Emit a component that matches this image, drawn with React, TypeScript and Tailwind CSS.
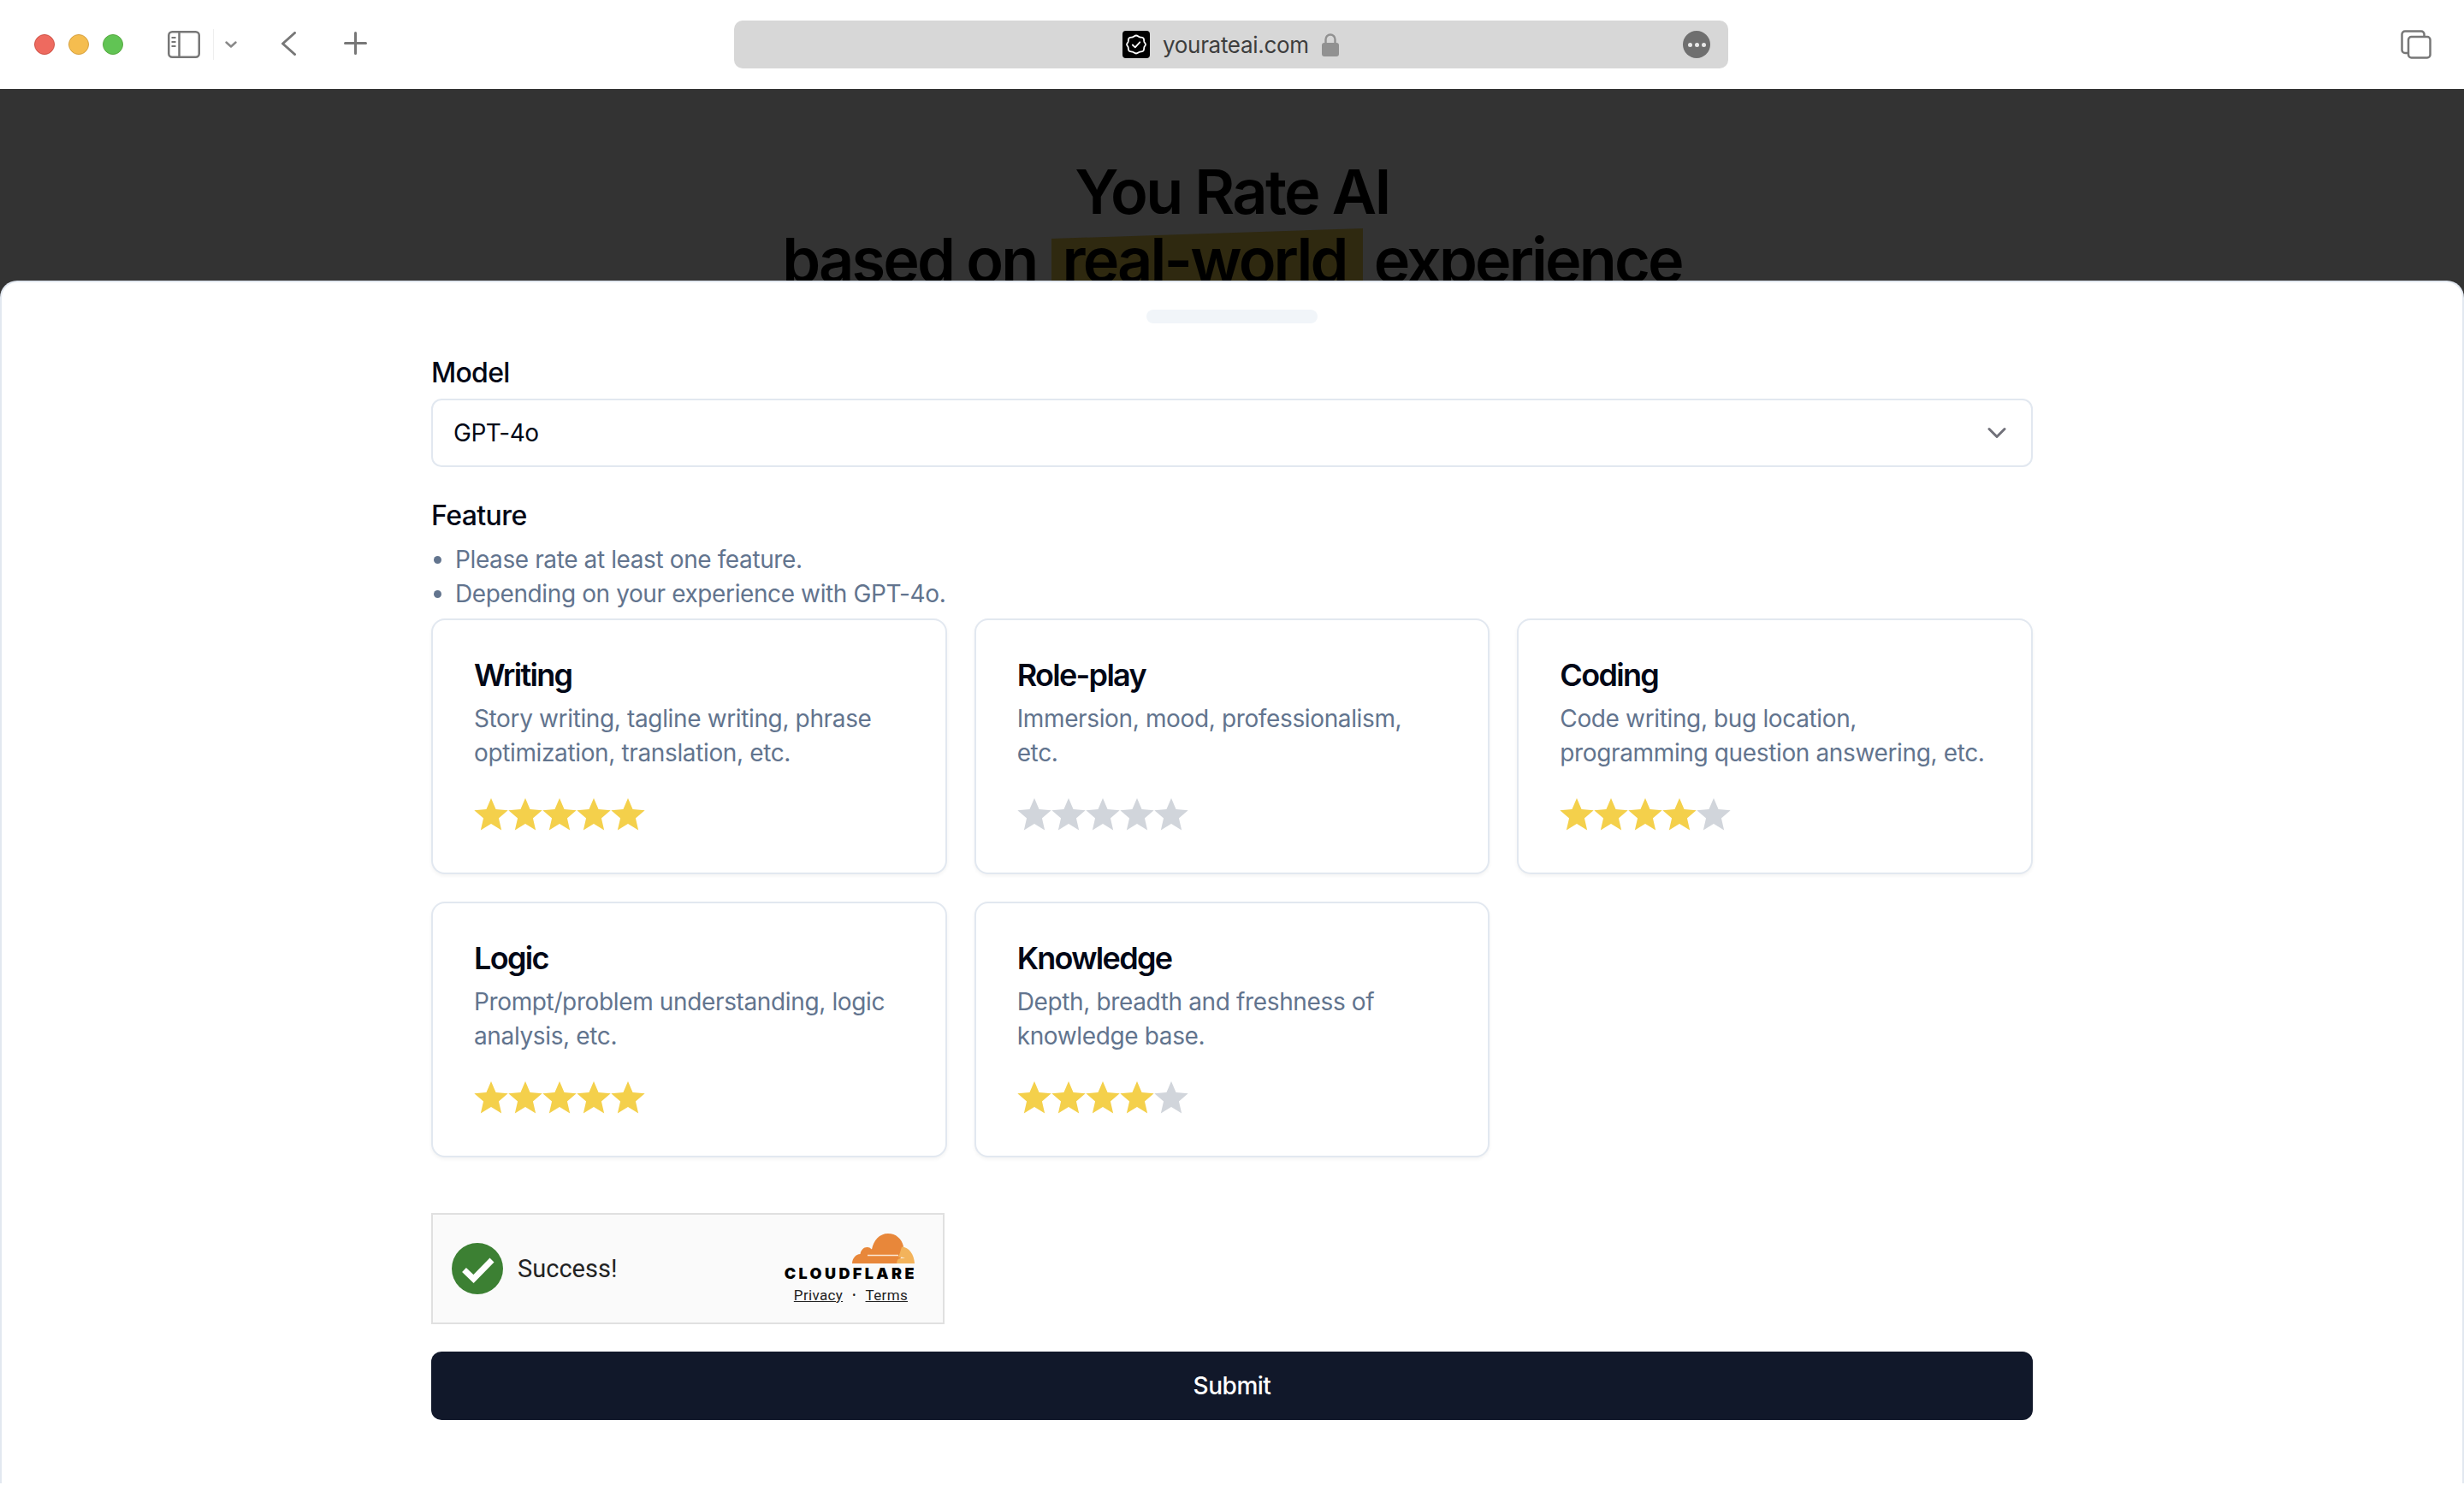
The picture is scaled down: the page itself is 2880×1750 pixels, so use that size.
import { ChevronDown } from 'lucide-react';

const features = [
  { title: 'Writing', desc: 'Story writing, tagline writing, phrase optimization, translation, etc.', stars: 5 },
  { title: 'Role-play', desc: 'Immersion, mood, professionalism, etc.', stars: 0 },
  { title: 'Coding', desc: 'Code writing, bug location, programming question answering, etc.', stars: 4 },
  { title: 'Logic', desc: 'Prompt/problem understanding, logic analysis, etc.', stars: 5 },
  { title: 'Knowledge', desc: 'Depth, breadth and freshness of knowledge base.', stars: 4 },
];

function Star({ on }: { on: boolean }) {
  return (
    <svg viewBox="2 2 20 19.3" className={on ? 'w-[40px] h-[38px] fill-[#f4d04b]' : 'w-[40px] h-[38px] fill-[#d1d5db]'}>
      <path d="M12 17.27L18.18 21l-1.64-7.03L22 9.24l-7.19-.61L12 2 9.19 8.63 2 9.24l5.46 4.73L5.82 21z" />
    </svg>
  );
}

function FeatureCard({ title, desc, stars }: { title: string; desc: string; stars: number }) {
  return (
    <div className="border-2 border-slate-200 rounded-[16px] bg-white pt-[44px] pb-[49px] px-[48px] shadow-[0_2px_4px_rgba(0,0,0,0.05)]">
      <h3 className="text-[36px] leading-[40px] font-semibold tracking-[-0.047em] text-[#020817]">{title}</h3>
      <p className="mt-[11px] pr-[2px] text-[28px] leading-[40px] tracking-[-0.013em] text-slate-500">{desc}</p>
      <div className="flex mt-[33px]">
        {[0, 1, 2, 3, 4].map((i) => (
          <Star key={i} on={i < stars} />
        ))}
      </div>
    </div>
  );
}

function Toolbar() {
  return (
    <div className="h-[104px] bg-white flex items-center pl-[40px] shrink-0">
      <div className="flex gap-[16px]">
        <div className="w-[24px] h-[24px] rounded-full bg-[#ee6a5f] border border-[#ce5347]" />
        <div className="w-[24px] h-[24px] rounded-full bg-[#f5bd4f] border border-[#d6a243]" />
        <div className="w-[24px] h-[24px] rounded-full bg-[#61c454] border border-[#58a942]" />
      </div>
      <svg viewBox="0 0 38 32" className="w-[38px] h-[32px] ml-[52px]" fill="none" stroke="#777" strokeWidth="2.5">
        <rect x="1.25" y="1.25" width="35.5" height="29.5" rx="4" />
        <path d="M13.5 1.5v29" />
        <path d="M4.5 8h5M4.5 13h5M4.5 18h5" strokeWidth="2" />
      </svg>
      <div className="w-px h-[36px] bg-[#eeeeee] ml-[15px]" />
      <svg viewBox="0 0 14 8" className="w-[14px] h-[8px] ml-[13px]" fill="none" stroke="#888" strokeWidth="2.4" strokeLinecap="round" strokeLinejoin="round">
        <path d="M1.5 1.5L7 6.5l5.5-5" />
      </svg>
      <svg viewBox="0 0 17 28" className="w-[17px] h-[28px] ml-[52px] -mt-[3px]" fill="none" stroke="#777" strokeWidth="3" strokeLinecap="round" strokeLinejoin="round">
        <path d="M15.5 1.5L1.5 14l14 12.5" />
      </svg>
      <svg viewBox="0 0 27 27" className="w-[27px] h-[27px] ml-[56px] -mt-[3px]" fill="none" stroke="#777" strokeWidth="3" strokeLinecap="round">
        <path d="M13.5 1.5v24M1.5 13.5h24" />
      </svg>
      <div className="ml-[429px] w-[1162px] h-[56px] rounded-[10px] bg-[#d7d7d7] flex items-center pl-[454px] pr-[21px]">
        <svg viewBox="0 0 32 32" className="w-[32px] h-[32px]" fill="none">
          <rect width="32" height="32" rx="4" fill="#000" />
          <path
            d="M16 5.500c1.800 0 2.600 1.400 4.200 1.900 1.700.5 3.200 0 4.200 1.200 1.100 1.300.5 2.800 1 4.400.5 1.300 1.600 1.700 1.600 3s-1.100 1.700-1.600 3c-.5 1.600.1 3.100-1 4.400-1 1.200-2.500.7-4.200 1.200-1.600.5-2.400 1.900-4.200 1.900s-2.600-1.400-4.200-1.900c-1.700-.5-3.200 0-4.200-1.200-1.100-1.300-.5-2.800-1-4.400-.5-1.300-1.600-1.700-1.600-3s1.100-1.700 1.600-3c.5-1.600-.1-3.100 1-4.400 1-1.200 2.500-.7 4.200-1.200 1.600-.5 2.400-1.900 4.200-1.900z"
            stroke="#fff"
            strokeWidth="1.800"
          />
          <path d="M11.800 16.500l3 2.800 5.500-6" stroke="#fff" strokeWidth="1.800" strokeLinecap="round" strokeLinejoin="round" />
        </svg>
        <span className="ml-[15px] text-[26px] leading-[32px] tracking-[-0.012em] text-[#3d3d3d] mt-[2px]">yourateai.com</span>
        <svg viewBox="0 0 20 27" className="w-[20px] h-[27px] ml-[15px] mt-[1px]">
          <path d="M4.500 12V7a5.500 5.500 0 0 1 11 0v5" fill="none" stroke="#919191" strokeWidth="2.400" />
          <rect y="11" width="20" height="16" rx="3" fill="#919191" />
        </svg>
        <div className="ml-auto w-[32px] h-[32px] rounded-full bg-[#6f6f6f] flex items-center justify-center gap-[3px]">
          <div className="w-[5px] h-[5px] rounded-full bg-[#e8e8e8]" />
          <div className="w-[5px] h-[5px] rounded-full bg-[#e8e8e8]" />
          <div className="w-[5px] h-[5px] rounded-full bg-[#e8e8e8]" />
        </div>
      </div>
      <svg viewBox="0 0 36 34" className="w-[36px] h-[34px] ml-[786px]" fill="none" stroke="#777" strokeWidth="2.500">
        <path d="M8 27H5a3.500 3.500 0 0 1-3.500-3.500V5A3.500 3.500 0 0 1 5 1.500h19A3.500 3.500 0 0 1 27.500 5v3" />
        <rect x="9" y="8" width="25.500" height="24.500" rx="3.500" />
      </svg>
    </div>
  );
}

function CloudflareLogo() {
  return (
    <svg viewBox="0 0 73 35" className="w-[73px] h-[35px]">
      <path
        d="M0 35c.3-6 4-10.500 9.500-11 .8-5 4.500-8.500 8.500-8 2.500.3 4 1.300 5 2.500C25 8 32 0 42 0c9 0 16 6 18 15-1.500 6-2.500 12-4 15.500-.8 2.800-2 4.500-4 4.500z"
        fill="#e8873a"
      />
      <path d="M58 15.500c8.500.5 14.500 9 15 19.500H53c-1 0-1-1-.6-2.200l.6-1.800c.5-1.200 2-2 4-2l5-.5c-2-1-5-.8-8-.8 1.500-4 3-8 4-12.200z" fill="#f3b35b" />
      <path d="M18 25.500h36" stroke="#fbe6d3" strokeWidth="1.600" fill="none" />
    </svg>
  );
}

function Turnstile() {
  return (
    <div className="w-[600px] h-[130px] border-2 border-[#e0e0e0] bg-[#fafafa] flex items-center justify-between pl-[22px] pr-[33px] font-['Roboto',sans-serif]">
      <div className="flex items-center gap-[17px]">
        <svg viewBox="0 0 60 60" className="w-[60px] h-[60px]">
          <circle cx="30" cy="30" r="30" fill="#3c8033" />
          <path d="M14.500 31.500L25.500 42 47 20" fill="none" stroke="#fff" strokeWidth="7" />
        </svg>
        <span className="text-[29px] leading-[36px] text-[#232323]">Success!</span>
      </div>
      <div className="flex flex-col items-end">
        <CloudflareLogo />
        <div className="mt-[3px] text-[18px] leading-[18px] font-black tracking-[0.19em] text-black font-['Inter',sans-serif] -mr-[3px]">CLOUDFLARE</div>
        <div className="mt-[6px] mr-[8px] flex items-center gap-[11px] text-[17px] leading-[20px] tracking-[0.02em] text-[#232323]">
          <span className="underline">Privacy</span>
          <span className="text-[12px]">•</span>
          <span className="underline">Terms</span>
        </div>
      </div>
    </div>
  );
}

export default function App() {
  return (
    <div className="w-[2880px] h-[1750px] bg-white flex flex-col overflow-hidden font-['Inter',sans-serif]">
      <Toolbar />
      <div className="bg-[#333333]">
        <div className="h-[224px] overflow-hidden pt-[80px] text-center text-black text-[72px] leading-[80px] font-semibold tracking-[-0.04em]">
          <div className="tracking-[-0.036em]">You Rate AI</div>
          <div>
            based on{' '}
            <span className="relative inline-block isolate pl-[15px] pr-[17px]">
              <span className="absolute -z-10 left-[2px] -right-[3px] top-0 h-[70px] bg-[#2f2910] [clip-path:polygon(0_15px,100%_3px,100%_100%,0_100%)]" />
              real-world
            </span>{' '}
            experience
          </div>
        </div>
        <div className="h-[1406px] bg-white rounded-t-[20px] border-t-2 border-x-2 border-slate-200 pt-[32px]">
          <div className="w-[200px] h-[16px] rounded-full bg-slate-100 mx-auto" />
          <div className="mt-[34px] ml-[502px] w-[1872px]">
            <div className="text-[32px] leading-[48px] font-medium tracking-[-0.022em] text-[#020817]">Model</div>
            <div className="mt-[6px] h-[80px] border-2 border-slate-200 rounded-[12px] flex items-center justify-between pl-[24px] pr-[22px] text-[28px] tracking-[-0.017em] text-[#020817]">
              <span>GPT-4o</span>
              <ChevronDown className="w-[36px] h-[36px] text-[#71717a]" strokeWidth={2} />
            </div>
            <div className="mt-[33px] text-[32px] leading-[48px] font-medium tracking-[-0.018em] text-[#020817]">Feature</div>
            <ul className="mt-[7px] list-disc pl-[28px] text-[28px] leading-[40px] tracking-[-0.014em] text-slate-500">
              <li>Please rate at least one feature.</li>
              <li>Depending on your experience with GPT-4o.</li>
            </ul>
            <div className="mt-[9px] grid grid-cols-3 gap-[32px]">
              {features.map((f) => (
                <FeatureCard key={f.title} {...f} />
              ))}
            </div>
            <div className="mt-[65px]">
              <Turnstile />
            </div>
            <button className="mt-[32px] w-full h-[80px] rounded-[12px] bg-[#11182a] text-white text-[28px] tracking-[-0.017em] font-medium">Submit</button>
          </div>
        </div>
      </div>
    </div>
  );
}
